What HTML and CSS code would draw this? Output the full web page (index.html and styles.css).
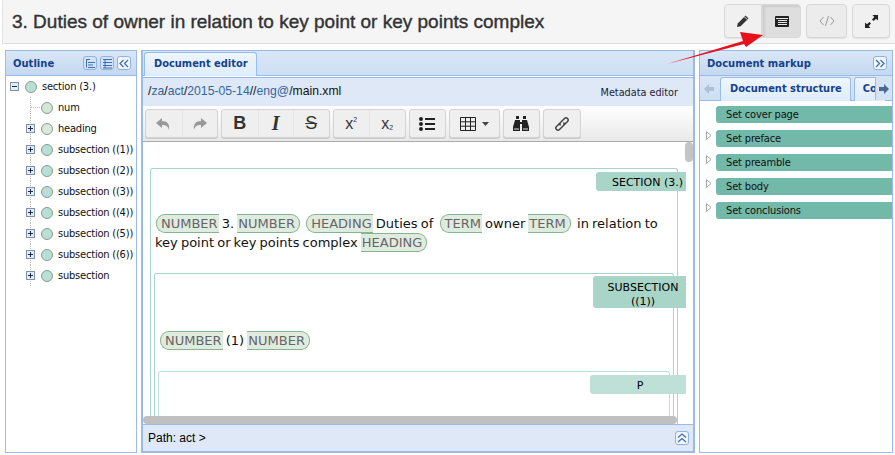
FILE: index.html
```html
<!DOCTYPE html>
<html lang="en">
<head>
  <meta charset="UTF-8">
  <title>Document editor</title>
  <link rel="stylesheet" href="styles.css">
</head>
<body>
  <svg class="defs" width="0" height="0">
    <symbol id="plus" viewBox="0 0 9 9"><rect x=".5" y=".5" width="8" height="8" fill="#e4ebf5" stroke="#7f8fa6"/><path d="M2 4.500h5M4.500 2v5" stroke="#1c2c50"/></symbol>
    <symbol id="minus" viewBox="0 0 9 9"><rect x=".5" y=".5" width="8" height="8" fill="#e4ebf5" stroke="#7f8fa6"/><path d="M2 4.500h5" stroke="#1c2c50"/></symbol>
    <symbol id="tri" viewBox="0 0 6 9"><path d="M.5.5l4.500 4-4.500 4z" fill="#fff" stroke="#a5a5a5"/></symbol>
  </svg>

  <header class="top-bar">
    <h1>3. Duties of owner in relation to key point or key points complex</h1>
    <div class="mode-buttons">
      <div class="btn-group">
        <button class="mode-btn">
          <svg width="14" height="14" viewBox="0 0 14 14"><path d="M1 13l.7-3.600L9.600 1.500l2.900 2.900-7.900 7.900z" fill="#333"/><path d="M8.400 2.800l2.800 2.800" stroke="#eee"/></svg>
        </button>
        <button class="mode-btn active">
          <svg width="14" height="11" viewBox="0 0 14 11"><rect width="14" height="11" rx="1" fill="#222"/><path d="M1 2.500h12M3 4.500h9M3 6.500h9M3 8.500h9" stroke="#e8e8e8"/></svg>
        </button>
      </div>
      <button class="mode-btn single off">
        <svg width="16" height="12" viewBox="0 0 16 12" fill="none" stroke="#999"><path d="M4.500 2L1 6l3.500 4M11.500 2L15 6l-3.500 4M9.500 1l-3 10"/></svg>
      </button>
      <button class="mode-btn single">
        <svg width="13" height="13" viewBox="0 0 13 13"><path d="M7.500 0H13v5.500L11 3.700 8.600 6 7 4.400 9.300 2zM5.500 13H0V7.500L2 9.300 4.400 7 6 8.600 3.700 11z" fill="#222"/></svg>
      </button>
    </div>
  </header>

  <main class="workspace">
    <section class="panel outline">
      <div class="panel-head">
        <span class="panel-title">Outline</span>
        <span class="head-btn"><svg width="11" height="11" viewBox="0 0 11 11" fill="none" stroke="#3f6fb0"><path d="M1 1.500h4M3 4.500h7M3 7h5M3 9.500h7M1.500 2v7.500"/></svg></span>
        <span class="head-btn"><svg width="11" height="11" viewBox="0 0 11 11" fill="none" stroke="#3f6fb0"><path d="M1 1.500h9M1 4.500h9M1 7.500h9M1 10h9M3 1v9"/></svg></span>
        <span class="head-btn light"><svg width="10" height="9" viewBox="0 0 10 9" fill="none" stroke="#3f6fb0" stroke-width="1.300"><path d="M4.500 1L1 4.500 4.500 8M9 1L5.500 4.500 9 8"/></svg></span>
      </div>
      <ul class="tree">
        <li class="root"><svg class="toggle" width="9" height="9"><use href="#minus"/></svg><i class="dot deep"></i>section (3.)</li>
        <li class="leaf"><i class="dot"></i>num</li>
        <li><svg class="toggle" width="9" height="9"><use href="#plus"/></svg><i class="dot pale"></i>heading</li>
        <li><svg class="toggle" width="9" height="9"><use href="#plus"/></svg><i class="dot deep"></i>subsection ((1))</li>
        <li><svg class="toggle" width="9" height="9"><use href="#plus"/></svg><i class="dot deep"></i>subsection ((2))</li>
        <li><svg class="toggle" width="9" height="9"><use href="#plus"/></svg><i class="dot deep"></i>subsection ((3))</li>
        <li><svg class="toggle" width="9" height="9"><use href="#plus"/></svg><i class="dot deep"></i>subsection ((4))</li>
        <li><svg class="toggle" width="9" height="9"><use href="#plus"/></svg><i class="dot deep"></i>subsection ((5))</li>
        <li><svg class="toggle" width="9" height="9"><use href="#plus"/></svg><i class="dot deep"></i>subsection ((6))</li>
        <li><svg class="toggle" width="9" height="9"><use href="#plus"/></svg><i class="dot deep"></i>subsection</li>
      </ul>
    </section>

    <section class="panel editor">
      <div class="tab-strip">
        <span class="tab">Document editor</span>
      </div>
      <div class="crumbs">
        <span class="crumb-path">/<a>za</a>/<a>act</a>/<a>2015-05-14</a>//<a>eng@</a>/main.xml</span>
        <span class="meta-link">Metadata editor</span>
      </div>
      <div class="toolbar">
        <div class="tool-group">
          <span class="tool off"><svg width="15" height="14" viewBox="0 0 15 14"><path d="M6 1L0 6l6 5V8c4 0 6 1 7 5 1-6-2-9-7-9z" fill="#999"/></svg></span>
          <span class="tool off"><svg width="15" height="14" viewBox="0 0 15 14"><path d="M9 1l6 5-6 5V8c-4 0-6 1-7 5-1-6 2-9 7-9z" fill="#999"/></svg></span>
        </div>
        <div class="tool-group">
          <span class="tool glyph bold">B</span>
          <span class="tool glyph ital">I</span>
          <span class="tool glyph strike">S</span>
        </div>
        <div class="tool-group">
          <span class="tool glyph script">x<sup>2</sup></span>
          <span class="tool glyph script">x<sub>2</sub></span>
        </div>
        <div class="tool-group">
          <span class="tool"><svg width="16" height="14" viewBox="0 0 16 14" fill="#222"><circle cx="2" cy="2" r="2"/><circle cx="2" cy="7" r="2"/><circle cx="2" cy="12" r="2"/><path d="M6 1h10v2H6zM6 6h10v2H6zM6 11h10v2H6z"/></svg></span>
        </div>
        <div class="tool-group">
          <span class="tool wide"><svg width="16" height="14" viewBox="0 0 16 14" fill="none" stroke="#222"><path d="M.5.500h15v13H.5zM.5 4.800h15M.5 9.200h15M5.500.5v13M10.500.5v13"/></svg><svg class="caret" width="7" height="4" viewBox="0 0 7 4"><path d="M0 0h7L3.500 4z" fill="#444"/></svg></span>
        </div>
        <div class="tool-group">
          <span class="tool"><svg width="16" height="15" viewBox="0 0 16 15" fill="#222"><path d="M3 0h3v3H3zM10 0h3v3h-3zM2 4h5v2h2V4h5l2 7v4H9V8H7v7H0v-4z"/><path d="M1 13h5M10 13h5" stroke="#ddd"/></svg></span>
        </div>
        <div class="tool-group">
          <span class="tool"><svg width="16" height="16" viewBox="0 0 16 16" fill="none" stroke="#444" stroke-width="1.500"><path d="M6.500 6.500l-4 4a2.100 2.100 0 0 0 3 3l4-4a2.100 2.100 0 0 0 0-3M9.500 9.500l4-4a2.100 2.100 0 0 0-3-3l-4 4a2.100 2.100 0 0 0 0 3"/></svg></span>
        </div>
      </div>
      <div class="doc">
        <div class="box section">
          <div class="box-label">SECTION (3.)</div>
          <p class="doc-text"><span class="tag open">NUMBER</span> 3. <span class="tag close">NUMBER</span> &nbsp;<span class="tag open">HEADING</span> Duties of &nbsp;<span class="tag open">TERM</span> owner <span class="tag close">TERM</span> &nbsp;in relation to<br>key point or key points complex <span class="tag close">HEADING</span></p>
          <div class="box subsection">
            <div class="box-label two-line">SUBSECTION ((1))</div>
            <p class="doc-text"><span class="tag open">NUMBER</span> (1) <span class="tag close">NUMBER</span></p>
            <div class="box para">
              <div class="box-label">P</div>
            </div>
          </div>
        </div>
        <span class="v-thumb"></span>
        <span class="h-thumb"></span>
      </div>
      <div class="path-bar">
        <span>Path: act &gt;</span>
        <span class="head-btn light"><svg width="10" height="10" viewBox="0 0 10 10" fill="none" stroke="#3f6fb0" stroke-width="1.300"><path d="M1 4.500L5 1l4 3.500M1 9l4-3.500L9 9"/></svg></span>
      </div>
    </section>

    <section class="panel markup">
      <div class="panel-head">
        <span class="panel-title">Document markup</span>
        <span class="head-btn light"><svg width="10" height="9" viewBox="0 0 10 9" fill="none" stroke="#3f6fb0" stroke-width="1.300"><path d="M1 1l3.500 3.500L1 8M5.500 1L9 4.500 5.500 8"/></svg></span>
      </div>
      <div class="markup-tabs">
        <svg class="scroll-arrow" width="10" height="10" viewBox="0 0 10 10"><path d="M5 0v3h5v4H5v3L0 5z" fill="#aebfd6"/></svg>
        <span class="tab">Document structure</span>
        <span class="tab cut">Co</span>
        <span class="scroll-end"><svg width="10" height="10" viewBox="0 0 10 10"><path d="M5 0v3H0v4h5v3l5-5z" fill="#4a6a94"/></svg></span>
      </div>
      <ul class="structure">
        <li><span class="set">Set cover page</span></li>
        <li><svg class="tri" width="6" height="9"><use href="#tri"/></svg><span class="set">Set preface</span></li>
        <li><svg class="tri" width="6" height="9"><use href="#tri"/></svg><span class="set">Set preamble</span></li>
        <li><svg class="tri" width="6" height="9"><use href="#tri"/></svg><span class="set">Set body</span></li>
        <li><svg class="tri" width="6" height="9"><use href="#tri"/></svg><span class="set">Set conclusions</span></li>
      </ul>
    </section>
  </main>

  <svg class="arrow" width="100" height="36" viewBox="0 0 100 36">
    <path d="M0 32L76 9 73 0 96 3 79 15 77 12z" fill="#e8101c"/>
  </svg>
</body>
</html>
```

FILE: styles.css
```css
* {
  box-sizing: border-box;
  margin: 0;
  padding: 0;
}

html, body {
  width: 895px;
  height: 455px;
  overflow: hidden;
}

body {
  background: #fff;
  position: relative;
  font-family: 'DejaVu Sans', sans-serif;
  color: #000;
}

.defs {
  position: absolute;
}

ul {
  list-style: none;
}

/* top bar */
.top-bar {
  height: 44px;
  margin-left: 2px;
  padding: 4px 5px 0 9px;
  display: flex;
  justify-content: space-between;
  background: #f5f5f5;
  border-left: 1px solid #e2e2e2;
  border-bottom: 1px solid #ddd;
}

h1 {
  font: 19px/36px 'Liberation Sans', sans-serif;
  color: #333;
  -webkit-text-stroke: 0.4px #333;
}

.mode-buttons {
  display: flex;
  gap: 5px;
  height: 34px;
}

.btn-group {
  display: flex;
}

.mode-btn {
  width: 38px;
  height: 34px;
  display: flex;
  align-items: center;
  justify-content: center;
  background: #f0f0f0;
  border: 1px solid #d8d8d8;
  border-radius: 4px 0 0 4px;
  box-shadow: 0 1px 1px rgba(0, 0, 0, 0.08);
}

.mode-btn.active {
  width: 39px;
  background: #dedede;
  border-radius: 0 4px 4px 0;
  box-shadow: inset 2px 2px 2px rgba(0, 0, 0, 0.08);
}

.mode-btn.single {
  border-radius: 4px;
}

.mode-btn.off {
  width: 41px;
  background: #ececec;
}

/* panels */
.workspace {
  height: 412px;
  padding: 6px 0 3px 5px;
  display: flex;
  gap: 4px;
}

.panel {
  display: flex;
  flex-direction: column;
  border: 1px solid #99bbe8;
  overflow: hidden;
  background: #fff;
}

.outline {
  width: 132px;
}

.editor {
  width: 554px;
  border-width: 1px 2px 2px 2px;
}

.markup {
  width: 194px;
}

.panel-head {
  height: 25px;
  flex: none;
  padding: 0 5px 0 7px;
  display: flex;
  align-items: center;
  gap: 3px;
  background: linear-gradient(#dae7f6, #c4d8f0);
  border-bottom: 1px solid #99bbe8;
}

.panel-title {
  flex: 1;
  font-size: 10px;
  font-weight: bold;
  color: #15428b;
}

.head-btn {
  width: 14px;
  height: 14px;
  display: flex;
  align-items: center;
  justify-content: center;
  background: #d3e2f5;
  border: 1px solid #8fb2e0;
  border-radius: 3px;
}

.head-btn.light {
  background: #f2f6fc;
}

/* outline tree */
.tree {
  font: 11px/21px 'DejaVu Sans Condensed', 'DejaVu Sans', sans-serif;
  letter-spacing: -0.2px;
  color: #111;
}

.tree li {
  height: 21px;
  padding-left: 20px;
  display: flex;
  align-items: center;
  background: linear-gradient(#bbb 50%, transparent 50%) 24px 0 / 1px 2px repeat-y;
}

.tree li.root {
  padding-left: 4px;
  background: none;
}

.tree li.leaf {
  padding-left: 35px;
}

.leaf::before {
  content: "";
  width: 10px;
  margin: 0 1px 0 -11px;
  border-top: 1px dotted #bbb;
}

.toggle {
  margin-right: 6px;
  flex: none;
}

.dot {
  width: 12px;
  height: 12px;
  margin-right: 5px;
  flex: none;
  border-radius: 50%;
  background: #d4e6d6;
  border: 1px solid #8a9a90;
}

.dot.deep {
  background: #b8dfd3;
}

.dot.pale {
  background: #dbe8dc;
}

/* tabs */
.tab-strip {
  height: 25px;
  flex: none;
  padding: 1px 0 0 1px;
  display: flex;
  background: linear-gradient(#d9e6f6, #cddff3);
  border-bottom: 1px solid #99bbe8;
}

.tab {
  padding: 0 8px 0 9px;
  margin-bottom: -1px;
  font-size: 9.9px;
  font-weight: bold;
  line-height: 21px;
  color: #15428b;
  background: linear-gradient(#eef5fd, #deecfb);
  border: 1px solid #99bbe8;
  border-bottom: none;
  border-radius: 3px 3px 0 0;
}

.crumbs {
  height: 29px;
  flex: none;
  margin-top: 1px;
  padding-left: 5px;
  display: flex;
  align-items: center;
  justify-content: space-between;
  background: #dfe8f6;
  border-top: 1px solid #99bbe8;
}

.crumb-path {
  margin-bottom: 2px;
  font: 12.2px 'Liberation Sans', sans-serif;
  color: #111;
}

.crumb-path a {
  color: #33679f;
}

.meta-link {
  margin-right: 15px;
  font-size: 9.7px;
  color: #223;
}

/* toolbar */
.toolbar {
  height: 36px;
  flex: none;
  padding: 3px 0 0 2px;
  display: flex;
  gap: 3px;
  background: linear-gradient(#fff, #e9e9e9);
  border-bottom: 1px solid #aaa;
}

.tool-group {
  height: 29px;
  display: flex;
  background: #efefef;
  border: 1px solid #d3d3d3;
  border-radius: 3px;
  box-shadow: 0 1px 0 #ccc;
}

.tool {
  width: 35.5px;
  display: flex;
  align-items: center;
  justify-content: center;
  border-left: 1px solid #e6e6e6;
}

.tool:first-child {
  border-left: none;
}

.tool.wide {
  width: 48.5px;
  gap: 6px;
}

.glyph {
  font-family: 'Liberation Serif', serif;
  color: #333;
}

.bold {
  font: bold 18px 'Liberation Sans', sans-serif;
}

.ital {
  font: italic bold 20px 'Liberation Serif', serif;
}

.strike {
  font: 18px 'Liberation Sans', sans-serif;
  text-decoration: line-through;
}

.script {
  font: 16px 'Liberation Sans', sans-serif;
}

.script sup, .script sub {
  font-size: 7px;
  line-height: 8px;
}

.script sup {
  align-self: flex-start;
  margin-top: 6px;
}

.script sub {
  align-self: flex-end;
  margin-bottom: 5px;
}

/* document area */
.doc {
  flex: 1;
  min-height: 0;
  position: relative;
  overflow: hidden;
  padding: 26px 0 0 7px;
  background: #fff;
  font-size: 13px;
  line-height: 19px;
}

.box {
  border: 1px solid #a8d5c8;
  border-bottom: none;
  border-radius: 3px 3px 0 0;
  padding: 3px 3px 0 3px;
}

.section {
  width: 528px;
}

.subsection {
  margin-top: 21px;
  padding-top: 2px;
}

.para {
  margin-top: 21px;
  padding-top: 3px;
  height: 60px;
  border-color: #bfe0d7;
}

.box-label {
  float: right;
  width: 90px;
  height: 19px;
  margin-right: -12px;
  padding: 1px 3px 0 0;
  font-size: 11px;
  line-height: 19px;
  text-align: right;
  background: #a8d5c8;
  border-radius: 3px 0 0 3px;
}

.subsection > .box-label {
  margin-right: -16px;
}

.para > .box-label {
  width: 96px;
  margin-right: -20px;
  padding: 1px 0 0 4px;
  text-align: center;
  background: #bfe0d7;
}

.subsection > .two-line {
  width: 93px;
  height: 32px;
  padding: 5px 3px 0 10px;
  line-height: 14px;
  text-align: center;
}

.doc-text {
  clear: both;
  white-space: nowrap;
  padding: 23px 0 0 1px;
  word-spacing: -1px;
  color: #111;
}

.subsection > .doc-text {
  padding: 23px 0 0 2px;
}

.tag {
  display: inline-block;
  height: 19px;
  padding: 0 1px 0 4px;
  line-height: 17px;
  color: #666;
  background: #e0ebe0;
  border: 1px solid #85b58c;
  border-right: none;
  border-radius: 9px 0 0 9px;
  vertical-align: top;
}

.section > .doc-text > .tag:first-child {
  margin-left: 1px;
}

.tag.close {
  padding: 0 4px 0 1px;
  border: 1px solid #85b58c;
  border-left: none;
  border-radius: 0 9px 9px 0;
}

.v-thumb {
  position: absolute;
  top: 0;
  right: 0;
  width: 8px;
  height: 20px;
  background: #c4c4c4;
  border-radius: 4px;
}

.h-thumb {
  position: absolute;
  left: 0;
  right: 16px;
  bottom: 0;
  height: 8px;
  background: #c0c0c0;
  border-radius: 4px;
}

.path-bar {
  height: 27px;
  flex: none;
  padding: 0 4px 0 5px;
  display: flex;
  align-items: center;
  justify-content: space-between;
  font: 12px 'Liberation Sans', sans-serif;
  background: #dfe8f6;
  border-top: 1px solid #99bbe8;
}

/* markup panel */
.markup-tabs {
  height: 25px;
  flex: none;
  padding-top: 1px;
  position: relative;
  display: flex;
  align-items: flex-start;
  background: linear-gradient(#d9e6f6, #cddff3);
  border-bottom: 1px solid #99bbe8;
}

.scroll-arrow {
  margin: 7px 6px 0 4px;
  flex: none;
}

.markup-tabs .tab {
  flex: none;
  height: 24px;
}

.tab.cut {
  margin-left: 3px;
  padding-left: 8px;
}

.scroll-end {
  position: absolute;
  right: 0;
  top: 1px;
  width: 17px;
  height: 23px;
  display: flex;
  align-items: center;
  justify-content: center;
  background: #d3e2f5;
  border-left: 1px solid #99bbe8;
}

.structure {
  padding-top: 5px;
}

.structure li {
  height: 24px;
  padding-left: 16px;
  position: relative;
}

.tri {
  position: absolute;
  left: 6px;
  top: 1px;
}

.set {
  display: block;
  height: 17px;
  padding-left: 10px;
  font: 11px/17px 'DejaVu Sans Condensed', 'DejaVu Sans', sans-serif;
  letter-spacing: -0.15px;
  color: #111;
  background: #72b9a9;
  border-radius: 3px 0 0 3px;
}

/* annotation arrow */
.arrow {
  position: absolute;
  left: 667px;
  top: 32px;
}
```
